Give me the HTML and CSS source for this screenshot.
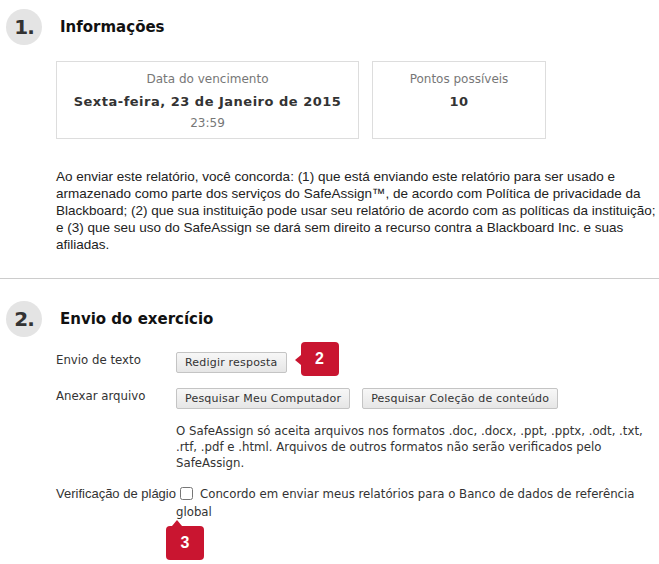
FILE: index.html
```html
<!DOCTYPE html>
<html lang="pt">
<head>
<meta charset="utf-8">
<title>Envio do exercício</title>
<link rel="stylesheet" href="styles.css">
</head>
<body>
<section class="step step-1">
  <header class="step-head">
    <span class="step-num">1.</span>
    <h2 class="step-title">Informações</h2>
  </header>
  <div class="cards">
    <div class="card card-wide">
      <div class="card-label">Data do vencimento</div>
      <div class="card-value">Sexta-feira, 23 de Janeiro de 2015</div>
      <div class="card-sub">23:59</div>
    </div>
    <div class="card card-narrow">
      <div class="card-label">Pontos possíveis</div>
      <div class="card-value">10</div>
    </div>
  </div>
  <p class="terms">Ao enviar este relatório, você concorda: (1) que está enviando este relatório para ser usado e armazenado como parte dos serviços do SafeAssign™, de acordo com Política de privacidade da Blackboard; (2) que sua instituição pode usar seu relatório de acordo com as políticas da instituição; e (3) que seu uso do SafeAssign se dará sem direito a recurso contra a Blackboard Inc. e suas afiliadas.</p>
</section>
<hr class="divider">
<section class="step step-2">
  <header class="step-head">
    <span class="step-num">2.</span>
    <h2 class="step-title">Envio do exercício</h2>
  </header>
  <div class="form">
    <div class="row row-text">
      <div class="label">Envio de texto</div>
      <div class="field">
        <button class="btn" type="button">Redigir resposta</button>
        <span class="badge badge-left">2</span>
      </div>
    </div>
    <div class="row row-file">
      <div class="label">Anexar arquivo</div>
      <div class="field">
        <div class="btns">
          <button class="btn" type="button">Pesquisar Meu Computador</button>
          <button class="btn" type="button">Pesquisar Coleção de conteúdo</button>
        </div>
        <p class="note">O SafeAssign só aceita arquivos nos formatos .doc, .docx, .ppt, .pptx, .odt, .txt, .rtf, .pdf e .html. Arquivos de outros formatos não serão verificados pelo SafeAssign.</p>
      </div>
    </div>
    <div class="row-check">
      <span class="label-inline">Verificação de plágio</span><input type="checkbox" class="check" id="chk"><label for="chk" class="check-text">Concordo em enviar meus relatórios para o Banco de dados de referência global</label>
    </div>
    <div class="badge-wrap">
      <span class="badge badge-top">3</span>
    </div>
  </div>
</section>
</body>
</html>
```
FILE: styles.css
```css
html, body {
  margin: 0;
  padding: 0;
  background: #fff;
}
body {
  font-family: "DejaVu Sans", Verdana, sans-serif;
  color: #333;
  width: 659px;
  height: 564px;
  overflow: hidden;
}
.step-head {
  display: flex;
  align-items: center;
  gap: 18px;
  padding-left: 6px;
}
.step-1 .step-head {
  padding-top: 9px;
}
.step-num {
  width: 36px;
  height: 36px;
  border-radius: 50%;
  background: #e4e4e4;
  display: flex;
  align-items: center;
  justify-content: center;
  font-weight: bold;
  font-size: 20px;
  color: #333;
  letter-spacing: -1px;
}
.step-title {
  margin: 0;
  font-size: 15px;
  font-weight: bold;
  color: #111;
}
.cards {
  display: flex;
  gap: 13px;
  margin: 16px 0 0 56px;
}
.card {
  border: 1px solid #ddd;
  height: 76px;
  text-align: center;
  box-sizing: content-box;
}
.card-wide { width: 301px; }
.card-narrow { width: 172px; }
.card-label {
  font-size: 12px;
  color: #777;
  margin-top: 9px;
  line-height: 16px;
}
.card-value {
  font-size: 13px;
  font-weight: bold;
  color: #333;
  margin-top: 6px;
  line-height: 18px;
  letter-spacing: 0.5px;
}
.card-sub {
  font-size: 12px;
  color: #777;
  margin-top: 4px;
  line-height: 16px;
}
.terms {
  font-family: "Liberation Sans", Arial, sans-serif;
  font-size: 13.5px;
  line-height: 17px;
  color: #222;
  margin: 29px 0 0 56px;
}
.divider {
  border: 0;
  border-top: 1px solid #ccc;
  margin: 25px 0 0;
}
.step-2 .step-head {
  padding-top: 22px;
}
.form {
  margin: 15px 0 0 56px;
  font-size: 11.75px;
}
.row {
  display: grid;
  grid-template-columns: 120px 1fr;
}
.label {
  line-height: 16px;
}
.row-text { height: 36px; }
.row-text .field {
  display: flex;
  align-items: flex-start;
  gap: 14px;
}
.btns {
  display: flex;
  gap: 12px;
}
.btn {
  font-family: "DejaVu Sans", Verdana, sans-serif;
  font-size: 11px;
  color: #333;
  background: linear-gradient(#f7f7f7, #e6e6e6);
  border: 1px solid #c4c4c4;
  border-radius: 2px;
  height: 21px;
  padding: 0 8px;
  margin: 0;
  letter-spacing: 0.2px;
}
.badge {
  position: relative;
  display: inline-flex;
  align-items: center;
  justify-content: center;
  width: 38px;
  height: 34px;
  border-radius: 4px;
  background: #c91530;
  color: #fff;
  font-family: "Liberation Sans", Arial, sans-serif;
  font-weight: bold;
  font-size: 16px;
}
.badge-left::before {
  content: "";
  position: absolute;
  left: -6px;
  top: 13px;
  border-style: solid;
  border-width: 5px 6px 5px 0;
  border-color: transparent #c91530 transparent transparent;
}
.badge-top::before {
  content: "";
  position: absolute;
  left: 6px;
  top: -6px;
  border-style: solid;
  border-width: 0 5px 6px 5px;
  border-color: transparent transparent #c91530 transparent;
}
.row-text .badge { margin-top: -10px; }
.note {
  margin: 14px 0 0 0;
  line-height: 16px;
}
.row-check {
  margin-top: 14px;
  padding-left: 120px;
  text-indent: -120px;
  line-height: 17px;
  font-family: "Liberation Sans", Arial, sans-serif;
  font-size: 13px;
}
.label-inline {
  display: inline-block;
  width: 120px;
  text-indent: 0;
}
.check {
  width: 13px;
  height: 13px;
  margin: 0 7px 0 4px;
  vertical-align: -2px;
}
.check-text {
  font-family: "DejaVu Sans", Verdana, sans-serif;
  font-size: 11.75px;
}
.badge-wrap {
  padding: 5px 0 0 110px;
}
```
